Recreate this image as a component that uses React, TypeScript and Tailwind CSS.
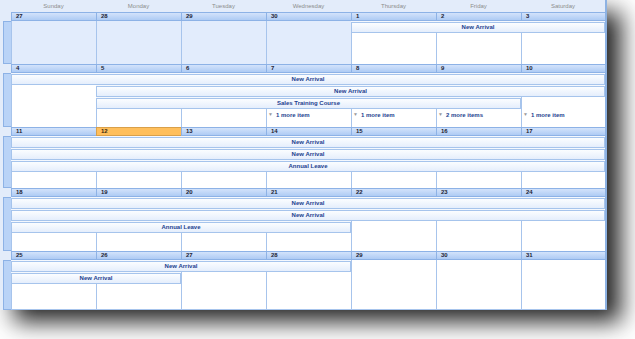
import React from "react";

type CalEvent = { title: string; start: number; span: number; row: number };
type More = { col: number; label: string };
type Week = {
  days: number[];
  other?: number[];
  today?: number;
  height: string;
  rows: string;
  events: CalEvent[];
  more?: More[];
  last?: boolean;
};

const dayNames = ["Sunday", "Monday", "Tuesday", "Wednesday", "Thursday", "Friday", "Saturday"];

const colStart = ["col-start-1", "col-start-2", "col-start-3", "col-start-4", "col-start-5", "col-start-6", "col-start-7"];
const colSpan = ["col-span-1", "col-span-2", "col-span-3", "col-span-4", "col-span-5", "col-span-6", "col-span-7"];
const rowStart = ["row-start-2", "row-start-3", "row-start-4", "row-start-5"];

const weeks: Week[] = [
  {
    days: [27, 28, 29, 30, 1, 2, 3],
    other: [0, 1, 2, 3],
    height: "h-[52px]",
    rows: "grid-rows-[9px_12px_1fr]",
    events: [{ title: "New Arrival", start: 4, span: 3, row: 0 }],
  },
  {
    days: [4, 5, 6, 7, 8, 9, 10],
    height: "h-[63px]",
    rows: "grid-rows-[9px_12px_12px_12px_12px_1fr]",
    events: [
      { title: "New Arrival", start: 0, span: 7, row: 0 },
      { title: "New Arrival", start: 1, span: 6, row: 1 },
      { title: "Sales Training Course", start: 1, span: 5, row: 2 },
    ],
    more: [
      { col: 3, label: "1 more item" },
      { col: 4, label: "1 more item" },
      { col: 5, label: "2 more items" },
      { col: 6, label: "1 more item" },
    ],
  },
  {
    days: [11, 12, 13, 14, 15, 16, 17],
    today: 1,
    height: "h-[61px]",
    rows: "grid-rows-[9px_12px_12px_12px_1fr]",
    events: [
      { title: "New Arrival", start: 0, span: 7, row: 0 },
      { title: "New Arrival", start: 0, span: 7, row: 1 },
      { title: "Annual Leave", start: 0, span: 7, row: 2 },
    ],
  },
  {
    days: [18, 19, 20, 21, 22, 23, 24],
    height: "h-[63px]",
    rows: "grid-rows-[9px_12px_12px_12px_1fr]",
    events: [
      { title: "New Arrival", start: 0, span: 7, row: 0 },
      { title: "New Arrival", start: 0, span: 7, row: 1 },
      { title: "Annual Leave", start: 0, span: 4, row: 2 },
    ],
  },
  {
    days: [25, 26, 27, 28, 29, 30, 31],
    height: "h-[59px]",
    rows: "grid-rows-[9px_12px_12px_1fr]",
    events: [
      { title: "New Arrival", start: 0, span: 4, row: 0 },
      { title: "New Arrival", start: 0, span: 2, row: 1 },
    ],
    last: true,
  },
];

const WeekRow = ({ week }: { week: Week }) => (
  <div className={`flex ${week.height}`}>
    <div className="w-[11px] flex flex-col">
      <div className="h-[9px]" />
      <div className="flex-1 ml-[3px] bg-[#b9d3f7] border-l border-y border-[#8db2e6]" />
    </div>
    <div className={`grid grid-cols-[repeat(6,85px)_84px] ${week.rows}`}>
      {week.days.map((d, i) => (
        <div
          key={`h${i}`}
          className={`${colStart[i]} row-start-1 border-y border-l pl-[4px] text-[6px] leading-[7px] font-bold ${
            week.today === i
              ? "bg-[#ffbf5c] border-[#d9a04a] text-[#3a2a10]"
              : "bg-linear-to-b from-[#d3e3fb] to-[#aecbf4] border-[#8db2e6] text-[#1c2333]"
          }`}
        >
          {d}
        </div>
      ))}
      {week.days.map((_, i) => (
        <div
          key={`c${i}`}
          className={`${colStart[i]} row-[2/-1] border-l border-[#a7c4ec] ${week.last ? "border-b" : ""} ${
            week.other?.includes(i) ? "bg-[#e2ecfc]" : "bg-white"
          }`}
        />
      ))}
      {week.events.map((ev, i) => (
        <div key={`e${i}`} className={`${colStart[ev.start]} ${colSpan[ev.span - 1]} ${rowStart[ev.row]} pt-[1px] bg-[#f4f8fe]`}>
          <div className="h-[11px] flex items-center justify-center border border-[#a6c4ec] bg-linear-to-b from-[#fbfdff] to-[#e5eefc] text-[6px] font-bold text-[#1d3f8f]">
            {ev.title}
          </div>
        </div>
      ))}
      {week.more?.map((m) => (
        <div
          key={`m${m.col}`}
          className={`${colStart[m.col]} row-start-5 flex items-center gap-[3px] pl-[2px] text-[6px] font-bold text-[#1d3f8f]`}
        >
          <span className="text-[5px] text-[#9a9a9a]">▼</span>
          <span>{m.label}</span>
        </div>
      ))}
    </div>
  </div>
);

export default function App() {
  return (
    <div className="w-[635px] h-[339px] bg-white overflow-hidden font-['Liberation_Sans',Arial,sans-serif]">
      <div className="w-[607px] bg-[#e3ecfa] border-r-2 border-[#8db2e3] shadow-[14px_12px_22px_rgba(0,0,0,0.85)]">
        <div className="flex h-[12px]">
          <div className="w-[11px]" />
          <div className="grid grid-cols-[repeat(6,85px)_84px]">
            {dayNames.map((n) => (
              <div key={n} className="flex items-center justify-center text-[6px] text-[#8c8c8c]">
                {n}
              </div>
            ))}
          </div>
        </div>
        {weeks.map((w, i) => (
          <WeekRow key={i} week={w} />
        ))}
      </div>
    </div>
  );
}
